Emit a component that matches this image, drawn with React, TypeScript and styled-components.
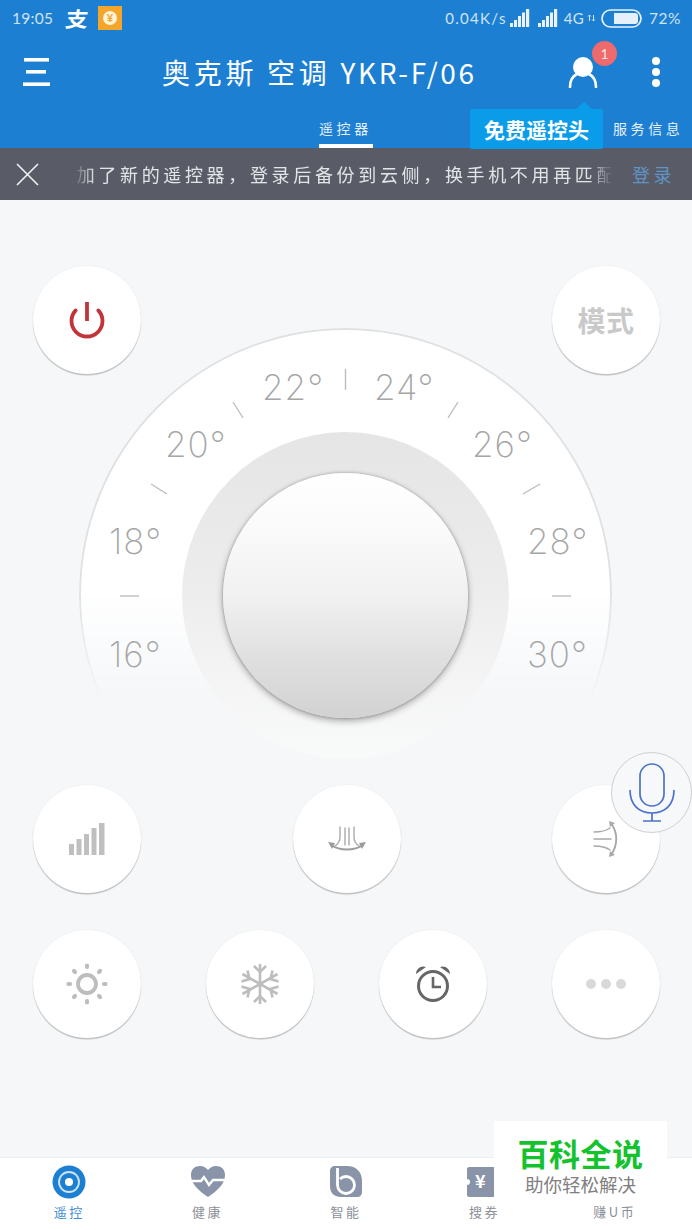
import React from "react";
import styled, { createGlobalStyle } from "styled-components";

const Global = createGlobalStyle`
  html, body { margin: 0; padding: 0; background: #f5f7f9; }
  body { font-family: "Noto Sans CJK SC", "Noto Sans", sans-serif; }
  * { box-sizing: border-box; }
`;

const Page = styled.div`
  position: relative;
  width: 692px;
  height: 1230px;
  overflow: hidden;
  display: flex;
  flex-direction: column;
  background: #f5f7f9;
`;

const Header = styled.header`
  background: #1d7fd2;
  height: 148px;
  color: #fff;
  display: flex;
  flex-direction: column;
`;

const StatusBar = styled.div`
  height: 36px;
  display: flex;
  align-items: center;
  padding: 0 11px 0 12px;
  color: #cfe4f7;
  font-family: "Lato", "Inter", sans-serif;
  font-size: 15.5px;
`;
const StatusTime = styled.span`
  width: 55px;
  letter-spacing: 0.3px;
`;
const AliGlyph = styled.span`
  width: 31px;
  font-family: "Noto Sans CJK SC", sans-serif;
  font-weight: 700;
  font-size: 21px;
  line-height: 1;
  color: #fff;
  transform: skewX(-8deg) scaleX(1.08);
`;
const CoinBadge = styled.span`
  width: 24px;
  height: 24px;
  background: #f4a52a;
  display: flex;
  align-items: center;
  justify-content: center;
`;
const CoinFace = styled.span`
  width: 14px;
  height: 14px;
  border-radius: 50%;
  background: #fff3d8;
  color: #f4a52a;
  font-size: 11px;
  font-weight: 700;
  line-height: 14px;
  text-align: center;
`;
const StatusRight = styled.div`
  margin-left: auto;
  display: flex;
  align-items: center;
  gap: 3px;
  letter-spacing: 0.55px;
`;
const Net = styled.span`
  font-size: 15px;
  letter-spacing: 1.3px;
`;
const BarGap = styled.span`
  width: 2px;
`;
const FourG = styled.span`
  margin-left: 3px;
  font-size: 15px;
  letter-spacing: 0.3px;
`;
const BatterySvg = styled.svg`
  margin-left: 2px;
`;
const Percent = styled.span`
  margin-left: 4px;
  font-size: 15.5px;
`;

const TitleRow = styled.div`
  height: 72px;
  display: flex;
  align-items: center;
  padding-left: 23px;
`;
const Title = styled.h1`
  margin: 0 0 0 112px;
  width: 412px;
  font-size: 28px;
  font-weight: 400;
  letter-spacing: 3.7px;
  white-space: pre;
  line-height: 1;
`;
const TitleModel = styled.span`
  letter-spacing: 2.7px;
`;
const UserWrap = styled.div`
  position: relative;
  width: 30px;
  height: 32px;
  margin-left: -6px;
`;
const Badge = styled.span`
  position: absolute;
  left: 24px;
  top: -15px;
  width: 25px;
  height: 25px;
  border-radius: 50%;
  background: #ef6a6c;
  color: #fbe3e3;
  font-family: "Lato", sans-serif;
  font-size: 14px;
  line-height: 25px;
  text-align: center;
`;
const Kebab = styled.div`
  margin-left: 54px;
  display: flex;
  flex-direction: column;
  gap: 3px;
`;
const Dot = styled.span`
  width: 8px;
  height: 8px;
  border-radius: 50%;
  background: #fff;
`;

const TabRow = styled.div`
  height: 40px;
  display: flex;
  padding-left: 319px;
`;
const Tab = styled.div<{ $active?: boolean }>`
  width: ${(p) => (p.$active ? "54px" : "70px")};
  margin-left: ${(p) => (p.$active ? "0" : "10px")};
  height: 40px;
  padding-top: 10px;
  font-size: 14px;
  line-height: 20px;
  letter-spacing: 3.6px;
  white-space: nowrap;
  color: #e6f1fa;
  border-bottom: ${(p) => (p.$active ? "4px solid #fff" : "none")};
`;
const Tip = styled.div`
  position: relative;
  z-index: 2;
  margin: 1px 0 0 97px;
  width: 133px;
  height: 40px;
  border-radius: 2px;
  background: #0a9ce8;
  color: #fff;
  font-size: 21px;
  font-weight: 700;
  line-height: 40px;
  text-align: center;
  &::before {
    content: "";
    position: absolute;
    right: 13px;
    top: -5px;
    width: 12px;
    height: 12px;
    background: #0a9ce8;
    transform: rotate(45deg);
  }
`;

const Notice = styled.div`
  height: 52px;
  background: #595c67;
  display: flex;
  align-items: center;
  padding-left: 16px;
`;
const Ticker = styled.div`
  margin-left: 34px;
  width: 540px;
  overflow: hidden;
  white-space: nowrap;
  font-size: 18px;
  letter-spacing: 3.66px;
  color: #e3e4e7;
  -webkit-mask-image: linear-gradient(90deg, transparent 0, #000 22px, #000 515px, transparent 540px);
  mask-image: linear-gradient(90deg, transparent 0, #000 22px, #000 515px, transparent 540px);
`;
const TickerText = styled.span`
  display: inline-block;
  margin-left: -18px;
`;
const Login = styled.span`
  margin-left: 19px;
  font-size: 18px;
  letter-spacing: 3.5px;
  color: #5e95c6;
`;

const Main = styled.main`
  flex: 1;
  display: flex;
  flex-direction: column;
  padding: 66px 32px 0 33px;
`;
const Row = styled.div`
  display: flex;
  justify-content: space-between;
  position: relative;
  z-index: 1;
`;
const LowerRow = styled(Row)<{ $top: number }>`
  margin-top: ${(p) => p.$top}px;
`;
const RoundBtn = styled.button`
  width: 108px;
  height: 108px;
  padding: 0;
  border: none;
  border-radius: 50%;
  background: #fff;
  box-shadow: 0 1.5px 1px rgba(0, 0, 0, 0.22), 0 0 2px rgba(0, 0, 0, 0.06);
  display: flex;
  align-items: center;
  justify-content: center;
  font-family: inherit;
`;
const ModeLabel = styled.span`
  font-size: 28px;
  font-weight: 700;
  color: #c9c9c9;
  letter-spacing: 0.5px;
`;

const Dial = styled.div`
  position: relative;
  width: 533px;
  height: 430px;
  margin: -46px 0 0 46px;
`;
const Face = styled.div`
  position: absolute;
  left: 0;
  top: 0;
  width: 533px;
  height: 533px;
  border-radius: 50%;
  border: 2px solid #dfe1e3;
  background: #fff;
  -webkit-mask-image: linear-gradient(180deg, #000 48%, transparent 70%);
  mask-image: linear-gradient(180deg, #000 48%, transparent 70%);
`;
const Ticks = styled.svg`
  position: absolute;
  left: 0;
  top: 0;
`;
const Temp = styled.span<{ $x: number; $y: number }>`
  position: absolute;
  left: ${(p) => p.$x}px;
  top: ${(p) => p.$y}px;
  font-family: "Inter", "Lato", sans-serif;
  font-weight: 200;
  font-size: 35px;
  line-height: 37px;
  letter-spacing: 1px;
  color: #a6a6a6;
`;
const Ring = styled.div`
  position: absolute;
  left: 103px;
  top: 104px;
  width: 327px;
  height: 327px;
  border-radius: 50%;
  background: linear-gradient(180deg, #e5e5e5 0%, #ececec 45%, #f4f4f5 75%, #f9fafa 100%);
  display: flex;
  align-items: center;
  justify-content: center;
`;
const Knob = styled.div`
  width: 245px;
  height: 245px;
  border-radius: 50%;
  background: linear-gradient(180deg, #ffffff 0%, #fbfbfb 20%, #f1f1f1 50%, #e0e0e0 75%, #d2d2d2 100%);
  box-shadow: 0 0 3px rgba(0, 0, 0, 0.28), 0 3px 7px rgba(0, 0, 0, 0.32);
`;

const MicBubble = styled.div`
  position: absolute;
  left: 611px;
  top: 752px;
  z-index: 3;
  width: 81px;
  height: 81px;
  border-radius: 50%;
  border: 1px solid #cfd0d2;
  background: rgba(247, 248, 250, 0.94);
  display: flex;
  align-items: center;
  justify-content: center;
`;

const BottomNav = styled.nav`
  height: 73px;
  background: #fff;
  border-top: 1px solid #eceef0;
  display: grid;
  grid-template-columns: repeat(5, 1fr);
`;
const NavItem = styled.div<{ $shift?: number }>`
  display: flex;
  flex-direction: column;
  align-items: center;
  padding-top: 6px;
  padding-right: ${(p) => p.$shift ?? 0}px;
`;
const NavIcon = styled.svg`
  width: 36px;
  height: 36px;
`;
const TicketMark = styled.text`
  font-family: "Noto Sans CJK SC", sans-serif;
  font-size: 18px;
  font-weight: 700;
  fill: #fff;
`;
const NavLabel = styled.span<{ $active?: boolean }>`
  margin-top: 3px;
  font-size: 13px;
  line-height: 18px;
  letter-spacing: 2.5px;
  color: ${(p) => (p.$active ? "#3f8ed4" : "#8c9099")};
`;

const Watermark = styled.div`
  position: absolute;
  left: 494px;
  top: 1121px;
  z-index: 4;
  width: 173px;
  height: 80px;
  background: #fff;
  display: flex;
  flex-direction: column;
  align-items: center;
  padding-top: 13px;
`;
const MarkTitle = styled.div`
  font-size: 31px;
  font-weight: 700;
  line-height: 38px;
  letter-spacing: 0.5px;
  color: #14c22e;
`;
const MarkSub = styled.div`
  font-size: 18.500px;
  line-height: 24px;
  color: #808080;
`;

const Bars = () => (
  <svg width={20} height={18} viewBox="0 0 20 18">
    <rect x="0" y="14" width="3" height="4" fill="#eaf3fb" />
    <rect x="4" y="11" width="3" height="7" fill="#eaf3fb" />
    <rect x="8" y="7" width="3" height="11" fill="#eaf3fb" />
    <rect x="12" y="3.5" width="3" height="14.5" fill="#eaf3fb" />
    <rect x="16" y="0" width="3.2" height="18" fill="#eaf3fb" />
  </svg>
);

const temps: [string, number, number][] = [
  ["22°", 183, 41],
  ["24°", 295, 41],
  ["20°", 86, 98],
  ["26°", 393, 98],
  ["18°", 30, 195],
  ["28°", 448, 195],
  ["16°", 30, 308],
  ["30°", 448, 308],
];

const ticks: [number, number, number, number][] = [
  [266.5, 41, 266.5, 62],
  [154, 74, 164, 90],
  [72, 156, 88, 166],
  [41, 268, 60, 268],
  [379, 74, 369, 90],
  [461, 156, 444, 166],
  [492, 268, 473, 268],
];

export default function App() {
  return (
    <Page>
      <Global />
      <Header>
        <StatusBar>
          <StatusTime>19:05</StatusTime>
          <AliGlyph>支</AliGlyph>
          <CoinBadge>
            <CoinFace>¥</CoinFace>
          </CoinBadge>
          <StatusRight>
            <Net>0.04K/s</Net>
            <Bars />
            <BarGap />
            <Bars />
            <FourG>4G</FourG>
            <svg width="9" height="8" viewBox="0 0 9 8">
              <path d="M2.5 7V1M1 2.5L2.5 1 4 2.5M6.5 1v6M5 5.5L6.5 7 8 5.5" stroke="#cfe4f7" strokeWidth="1" fill="none" />
            </svg>
            <BatterySvg width="41" height="19" viewBox="0 0 41 19">
              <rect x="1" y="1" width="39" height="17" rx="8.5" fill="none" stroke="#eaf3fb" strokeWidth="1.7" />
              <path d="M13 4h21a3 3 0 0 1 3 3v5a3 3 0 0 1-3 3H13z" fill="#e6f0fa" />
            </BatterySvg>
            <Percent>72%</Percent>
          </StatusRight>
        </StatusBar>
        <TitleRow>
          <svg width="27" height="28" viewBox="0 0 27 28">
            <rect x="1" y="0" width="25" height="3.6" fill="#fff" />
            <rect x="3" y="12" width="20" height="3.6" fill="#fff" />
            <rect x="0" y="24.4" width="27" height="3.6" fill="#fff" />
          </svg>
          <Title>
            奥克斯 空调 <TitleModel>YKR-F/06</TitleModel>
          </Title>
          <UserWrap>
            <svg width="30" height="32" viewBox="0 0 30 32">
              <circle cx="15" cy="11" r="10" fill="#fff" />
              <path d="M2 31c0-7 3-11 7-13M28 31c0-7-3-11-7-13" stroke="#fff" strokeWidth="2.6" fill="none" strokeLinecap="round" />
            </svg>
            <Badge>1</Badge>
          </UserWrap>
          <Kebab>
            <Dot />
            <Dot />
            <Dot />
          </Kebab>
        </TitleRow>
        <TabRow>
          <Tab $active>遥控器</Tab>
          <Tip>免费遥控头</Tip>
          <Tab>服务信息</Tab>
        </TabRow>
      </Header>

      <Notice>
        <svg width="23" height="23" viewBox="0 0 23 23">
          <path d="M1 1l21 21M22 1L1 22" stroke="#f2f2f2" strokeWidth="1.6" />
        </svg>
        <Ticker>
          <TickerText>添加了新的遥控器，登录后备份到云侧，换手机不用再匹配</TickerText>
        </Ticker>
        <Login>登录</Login>
      </Notice>

      <Main>
        <Row>
          <RoundBtn aria-label="power">
            <svg width="40" height="40" viewBox="0 0 40 40">
              <path d="M8.700 10.400A15.500 15.500 0 1 0 31.300 10.400" stroke="#c1353a" strokeWidth="3.8" fill="none" strokeLinecap="round" />
              <path d="M20 2v19" stroke="#c1353a" strokeWidth="3.8" />
            </svg>
          </RoundBtn>
          <RoundBtn>
            <ModeLabel>模式</ModeLabel>
          </RoundBtn>
        </Row>

        <Dial>
          <Face />
          <Ticks width="533" height="430" viewBox="0 0 533 430">
            {ticks.map(([a, b, c, d]) => (
              <line key={`${a}-${b}`} x1={a} y1={b} x2={c} y2={d} stroke="#bdbdbd" strokeWidth="1.4" />
            ))}
          </Ticks>
          {temps.map(([t, x, y]) => (
            <Temp key={t} $x={x} $y={y}>
              {t}
            </Temp>
          ))}
          <Ring>
            <Knob />
          </Ring>
        </Dial>

        <LowerRow $top={27}>
          <RoundBtn aria-label="speed">
            <svg width="36" height="32" viewBox="0 0 36 32">
              <rect x="0" y="21" width="5" height="11" fill="#bfbfbf" />
              <rect x="7.500" y="16" width="5" height="16" fill="#bfbfbf" />
              <rect x="15" y="11" width="5" height="21" fill="#bfbfbf" />
              <rect x="22.500" y="5" width="5" height="27" fill="#bfbfbf" />
              <rect x="30" y="0" width="5.500" height="32" fill="#bfbfbf" />
            </svg>
          </RoundBtn>
          <RoundBtn aria-label="vertical swing">
            <svg width="38" height="28" viewBox="0 0 38 28">
              <g stroke="#b0b0b0" strokeWidth="1.500" fill="none" strokeLinecap="round">
                <path d="M12 2v10c0 4-2 7-5 9" />
                <path d="M26 2v10c0 4 2 7 5 9" />
                <path d="M17 3v17M21 3v17" />
                <path d="M3 20c9 6 23 6 32 0" strokeWidth="2" stroke="#9c9c9c" />
              </g>
              <path d="M0 17l7 1-3 6zM38 17l-7 1 3 6z" fill="#9c9c9c" />
            </svg>
          </RoundBtn>
          <RoundBtn aria-label="horizontal swing">
            <svg width="26" height="36" viewBox="0 0 26 36">
              <g stroke="#a9a9a9" strokeWidth="1.400" fill="none" strokeLinecap="round">
                <path d="M1 11c7 0 12-1 16-4" />
                <path d="M1 18h17" />
                <path d="M1 25c7 0 12 1 16 4" />
                <path d="M18 2c7 10 7 22 0 32" strokeWidth="1.900" />
              </g>
              <path d="M16 0l6 2-5 4zM16 36l6-2-5-4z" fill="#a9a9a9" />
            </svg>
          </RoundBtn>
        </LowerRow>

        <LowerRow $top={37}>
          <RoundBtn aria-label="heat">
            <svg width="42" height="42" viewBox="0 0 42 42">
              <circle cx="21" cy="21" r="9" fill="none" stroke="#bdbdbd" strokeWidth="3.800" />
              <g stroke="#bdbdbd" strokeWidth="4.200" strokeLinecap="round">
                <path d="M21 2.500v1.500M21 38v1.500M2.500 21H4M38 21h1.500M8 8l1 1M33 33l1 1M34 8l-1 1M9 33l-1 1" />
              </g>
            </svg>
          </RoundBtn>
          <RoundBtn aria-label="cool">
            <svg width="40" height="42" viewBox="0 0 40 42">
              <g stroke="#bdbdbd" strokeWidth="2.600" fill="none">
                <path d="M20 1v40M2.500 11l35 20M37.500 11l-35 20" />
                <path d="M14 3l6 6 6-6M14 39l6-6 6 6" />
                <path d="M1.500 18.500L9.500 16 7.500 7.500M38.500 23.500l-8 2.500 2 8.500" />
                <path d="M38.500 18.500L30.500 16l2-8.500M1.500 23.500l8 2.500-2 8.500" />
              </g>
            </svg>
          </RoundBtn>
          <RoundBtn aria-label="timer">
            <svg width="36" height="38" viewBox="0 0 36 38">
              <circle cx="18" cy="21" r="14.500" fill="none" stroke="#666" strokeWidth="3" />
              <path d="M18 12v10h8" fill="none" stroke="#666" strokeWidth="2.600" />
              <path d="M1 9c0-5 5-9 10-7zM35 9c0-5-5-9-10-7z" fill="#666" />
            </svg>
          </RoundBtn>
          <RoundBtn aria-label="more">
            <svg width="42" height="12" viewBox="0 0 42 12">
              <circle cx="6" cy="6" r="5" fill="#d9d9d9" />
              <circle cx="21" cy="6" r="5" fill="#d9d9d9" />
              <circle cx="36" cy="6" r="5" fill="#d9d9d9" />
            </svg>
          </RoundBtn>
        </LowerRow>
      </Main>

      <MicBubble>
        <svg width="46" height="60" viewBox="0 0 46 60">
          <g fill="none" stroke="#4c72c9" strokeWidth="1.700">
            <rect x="11" y="1" width="24" height="42" rx="12" />
            <path d="M1 27c0 15 9 23 22 23s22-8 22-23" />
            <path d="M23 50v8M14 58h18" />
          </g>
        </svg>
      </MicBubble>

      <BottomNav>
        <NavItem>
          <NavIcon viewBox="0 0 36 36">
            <circle cx="18" cy="18" r="16.500" fill="#1d7fd2" />
            <circle cx="18" cy="18" r="10" fill="none" stroke="#cfe5f7" strokeWidth="1.800" />
            <circle cx="18" cy="18" r="4" fill="#fff" />
          </NavIcon>
          <NavLabel $active>遥控</NavLabel>
        </NavItem>
        <NavItem>
          <NavIcon viewBox="0 0 36 36">
            <path d="M18 33C8 26 1 20 1 11 1 5 5 2 10 2c4 0 6 2 8 4 2-2 4-4 8-4 5 0 9 3 9 9 0 9-7 15-17 22z" fill="#8a94a8" />
            <path d="M0 17h11l3-4 5 8 4-5h13" fill="none" stroke="#fff" strokeWidth="2.400" />
          </NavIcon>
          <NavLabel>健康</NavLabel>
        </NavItem>
        <NavItem>
          <NavIcon viewBox="0 0 36 36">
            <path d="M2 7c0-3 2-5 5-5h12c9 0 15 6 15 15v11c0 3-2 5-5 5H13C6 33 2 29 2 22z" fill="#8a94a8" />
            <path d="M9.500 4v17a8.500 8.500 0 1 0 8.500-8.500c-2.500 0-4.500 1-6 2.500" fill="none" stroke="#fff" strokeWidth="2.800" />
          </NavIcon>
          <NavLabel>智能</NavLabel>
        </NavItem>
        <NavItem>
          <NavIcon viewBox="0 0 36 36">
            <path d="M1 5c0-1 1-2 2-2h30c1 0 2 1 2 2v26c0 1-1 2-2 2H3c-1 0-2-1-2-2v-10a3 3 0 0 0 0-6z" fill="#8a94a8" />
            <TicketMark x="9" y="24">¥</TicketMark>
          </NavIcon>
          <NavLabel>搜券</NavLabel>
        </NavItem>
        <NavItem $shift={16}>
          <NavIcon viewBox="0 0 36 36">
            <circle cx="18" cy="18" r="16" fill="#8a94a8" />
          </NavIcon>
          <NavLabel>赚U币</NavLabel>
        </NavItem>
      </BottomNav>

      <Watermark>
        <MarkTitle>百科全说</MarkTitle>
        <MarkSub>助你轻松解决</MarkSub>
      </Watermark>
    </Page>
  );
}
